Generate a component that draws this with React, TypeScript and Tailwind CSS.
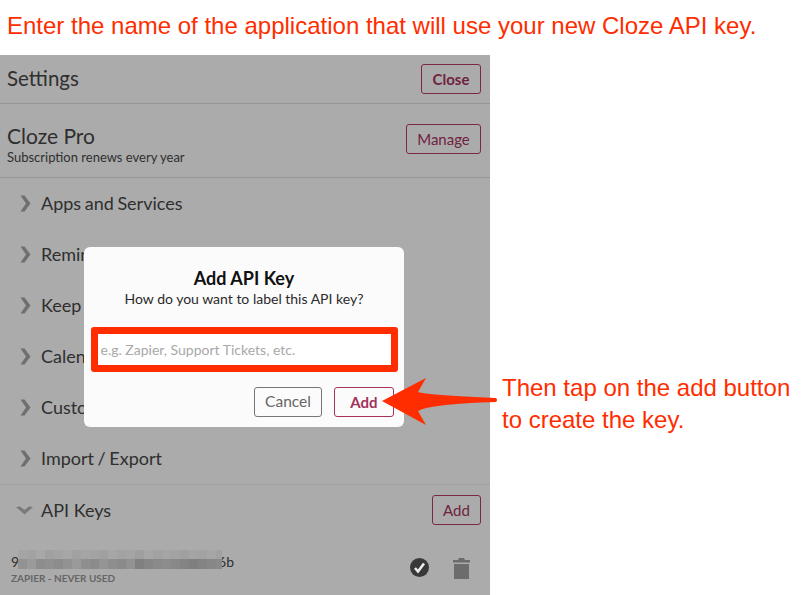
import React from "react";

const Chevron = () => (
  <svg width="11" height="17" viewBox="0 0 11 17" className="shrink-0 mr-[1px]">
    <path d="M0.5 0.5 L4.5 0.5 L10.5 8.5 L4.5 16.5 L0.5 16.5 L6 8.5 Z" fill="#6f6f6f" />
  </svg>
);

const ChevronDown = () => (
  <svg width="17" height="9" viewBox="0 0 17 9" className="shrink-0">
    <path d="M0 1 L4 0.5 L8.5 4 L13 0.5 L17 1 L8.5 8.5 Z" fill="#7a7a7a" />
  </svg>
);

const Row = ({ label }: { label: string }) => (
  <div className="h-[51px] flex items-center pl-[20px] gap-[9px]">
    <Chevron />
    <span className="text-[18px] text-[#2f2f2f] [word-spacing:-1px]">{label}</span>
  </div>
);

const blurTop = ["#a5a5a5","#a2a2a2","#a8a8a8","#a0a0a0","#a4a4a4","#a7a7a7","#a1a1a1","#a5a5a5","#a3a3a3","#a0a0a0","#a6a6a6","#a2a2a2","#a4a4a4","#9f9f9f","#a6a6a6","#a1a1a1","#a5a5a5","#a3a3a3","#a0a0a0","#a4a4a4","#a2a2a2","#a6a6a6","#a1a1a1"];
const blurBottom = ["#929292","#9a9a9a","#8d8d8d","#909090","#8c8c8c","#929292","#9a9a9a","#8f8f8f","#8b8b8b","#949494","#8e8e8e","#8a8a8a","#929292","#808080","#868686","#8a8a8a","#8c8c8c","#888888","#848484","#7f7f7f","#838383","#878787","#8a8a8a"];

const Mosaic = () => (
  <svg width="204" height="20" viewBox="0 0 204 20" className="absolute left-[18px] top-[550px]">
    {blurTop.map((c, i) => (
      <rect key={i} x={i * 9} y="0" width="9.2" height="9" fill={c} />
    ))}
    {blurBottom.map((c, i) => (
      <rect key={i} x={i * 9} y="9" width="9.2" height="10" fill={c} />
    ))}
  </svg>
);

const Arrow = () => (
  <svg width="120" height="50" viewBox="0 0 120 50" className="absolute left-[380px] top-[378px]">
    <path
      d="M2 23 L46 0 L38 14 Q46 17 116 20 Q118 22 116 24 Q50 26 38 33 L46 47 Z"
      fill="#ff2d00"
    />
  </svg>
);

export default function App() {
  return (
    <div className="relative w-[802px] h-[595px] bg-white overflow-hidden font-['Lato',sans-serif]">
      <div className="h-[55px] pl-[7px] pt-[10px] text-[24px] leading-[32px] text-[#ff2d00] font-['Liberation_Sans',sans-serif]">
        Enter the name of the application that will use your new Cloze API key.
      </div>

      <div className="w-[490px] h-[540px] bg-[#ababab]">
        <div className="h-[49px] flex items-center justify-between pl-[7px] pr-[9px] border-b border-[#969696]">
          <span className="text-[20.5px] leading-[26px] mt-[-2px] text-[#2f2f2f]">Settings</span>
          <div className="w-[60px] h-[30px] flex items-center justify-center rounded-[3px] border border-[#7c2845] text-[15px] font-bold text-[#6f2340]">
            Close
          </div>
        </div>

        <div className="h-[74px] flex items-start justify-between pl-[7px] pr-[9px] border-b border-[#969696]">
          <div className="flex flex-col pt-[19px]">
            <span className="text-[21px] leading-[26px] text-[#2f2f2f]">Cloze Pro</span>
            <span className="text-[13px] leading-[17px] text-[#2f2f2f]">Subscription renews every year</span>
          </div>
          <div className="mt-[20px] w-[75px] h-[30px] flex items-center justify-center rounded-[3px] border border-[#7c2845] text-[15px] text-[#6f2340]">
            Manage
          </div>
        </div>

        <Row label="Apps and Services" />
        <Row label="Reminders" />
        <Row label="Keep" />
        <Row label="Calendar" />
        <Row label="Custom" />
        <Row label="Import / Export" />

        <div className="border-t border-[#a0a0a0] h-[51px] flex items-center justify-between pl-[16px] pr-[9px]">
          <div className="flex items-center gap-[8px]">
            <ChevronDown />
            <span className="text-[18px] text-[#2f2f2f]">API Keys</span>
          </div>
          <div className="w-[49px] h-[30px] flex items-center justify-center rounded-[3px] border border-[#7c2845] text-[15px] text-[#6f2340]">
            Add
          </div>
        </div>

        <div className="flex items-start justify-between pl-[11px] pr-[20px] pt-[17px]">
          <div className="flex flex-col">
            <span className="w-[223px] flex justify-between text-[14px] leading-[20px] text-[#2f2f2f]">
              <span>9</span>
              <span>6b</span>
            </span>
            <span className="text-[10px] leading-[14px] mt-[-1px] font-bold text-[#666666]">ZAPIER - NEVER USED</span>
          </div>
          <div className="flex items-start gap-[24px] pt-[6px]">
            <svg width="19" height="19" viewBox="0 0 19 19">
              <circle cx="9.5" cy="9.5" r="9.5" fill="#383838" />
              <path d="M5 10 L8 13.5 L14 5.5" fill="none" stroke="#ececec" strokeWidth="2.6" />
            </svg>
            <svg width="17" height="21" viewBox="0 0 17 21">
              <path d="M6 0 H11 L12 2 H17 V4.5 H0 V2 H5 Z" fill="#6c6c6c" />
              <path d="M1 6 H16 V21 H1 Z" fill="#6c6c6c" />
            </svg>
          </div>
        </div>
      </div>

      <Mosaic />

      <div className="absolute left-[84px] top-[247px] w-[320px] h-[180px] rounded-[6px] bg-[#fbfbfb] flex flex-col items-center">
        <div className="mt-[19px] text-[18px] leading-[24px] font-bold text-[#111111]">Add API Key</div>
        <div className="text-[14px] leading-[18px] text-[#2a2a2a]">How do you want to label this API key?</div>
        <div className="mt-[19px] w-[307px] h-[45px] rounded-[3px] border-[7px] border-[#ff2d00] bg-white flex items-center pl-[3px] text-[14px] text-[#a8a8a8]">
          e.g. Zapier, Support Tickets, etc.
        </div>
        <div className="mt-[15px] w-full flex justify-end gap-[12px] pr-[10px]">
          <div className="w-[68px] h-[30px] flex items-center justify-center rounded-[3px] border border-[#777777] text-[15.5px] text-[#666666]">
            Cancel
          </div>
          <div className="w-[60px] h-[30px] flex items-center justify-center rounded-[3px] border border-[#a8325a] text-[15px] font-bold text-[#a3305a]">
            Add
          </div>
        </div>
      </div>

      <Arrow />

      <div className="absolute left-[502px] top-[372px] text-[24px] leading-[32px] text-[#ff2d00] font-['Liberation_Sans',sans-serif]">
        Then tap on the add button
        <br />
        to create the key.
      </div>
    </div>
  );
}
